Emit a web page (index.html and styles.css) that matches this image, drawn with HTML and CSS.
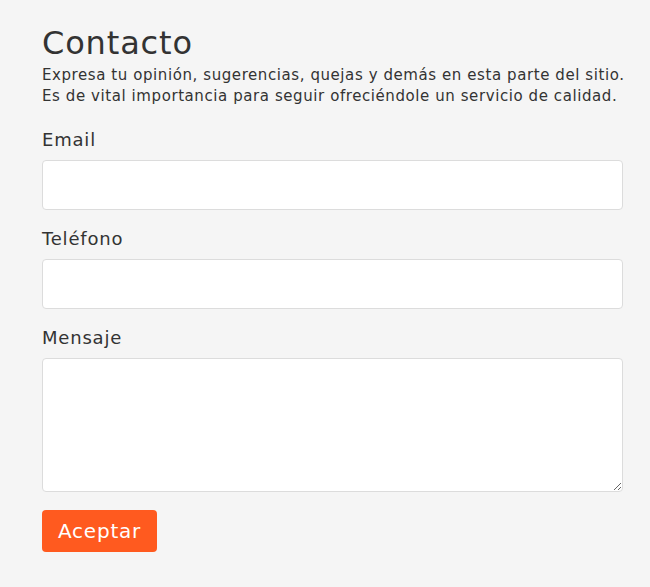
FILE: index.html
```html
<!DOCTYPE html>
<html lang="es">

<head>
    <meta charset="UTF-8">
    <meta name="viewport" content="width=device-width, initial-scale=1.0">
    <title>Contacto</title>
    <link rel="stylesheet" href="styles.css">
</head>

<body>
    <section class="contacto">
        <h1 class="titulo">Contacto</h1>
        <p class="descripcion">Expresa tu opinión, sugerencias, quejas y demás en esta parte del sitio.<br>Es de vital importancia para seguir ofreciéndole un servicio de calidad.</p>
        <form class="formulario">
            <label class="campo">
                <span class="etiqueta">Email</span>
                <input type="email" class="entrada">
            </label>
            <label class="campo">
                <span class="etiqueta">Teléfono</span>
                <input type="tel" class="entrada">
            </label>
            <label class="campo">
                <span class="etiqueta">Mensaje</span>
                <textarea class="entrada mensaje"></textarea>
            </label>
            <button type="button" class="boton">Aceptar</button>
        </form>
    </section>
</body>

</html>
```

FILE: styles.css
```css
* {
    margin: 0;
    padding: 0;
    box-sizing: border-box;
}

body {
    background: #f5f5f5;
    color: #333;
    font-family: "DejaVu Sans", sans-serif;
}

.contacto {
    width: 581px;
    margin-left: 42px;
    padding-top: 25px;
}

.titulo {
    font-size: 32px;
    font-weight: 400;
    line-height: 36px;
    letter-spacing: 0.85px;
}

.descripcion {
    font-size: 15px;
    line-height: 21px;
    margin-top: 4px;
    letter-spacing: 0.58px;
    white-space: nowrap;
}

.formulario {
    display: flex;
    flex-direction: column;
    margin-top: 23px;
}

.campo {
    display: flex;
    flex-direction: column;
    margin-bottom: 19px;
}

.campo:last-of-type {
    margin-bottom: 18px;
}

.etiqueta {
    font-size: 18px;
    line-height: 20px;
    margin-bottom: 10px;
    letter-spacing: 0.8px;
}

.entrada {
    display: block;
    width: 100%;
    height: 50px;
    background: #fff;
    border: 1px solid #dcdcdc;
    border-radius: 4px;
    font-family: inherit;
}

.mensaje {
    height: 134px;
}

.boton {
    align-self: flex-start;
    width: 115px;
    height: 42px;
    border: none;
    border-radius: 4px;
    background: #ff5a1f;
    color: #fff;
    font-family: inherit;
    font-size: 20px;
    letter-spacing: 0.8px;
}
```
